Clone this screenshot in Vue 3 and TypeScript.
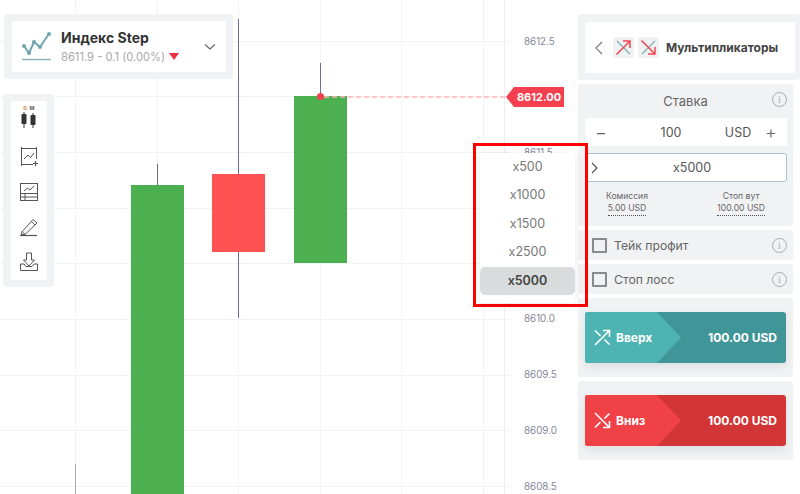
<template>
  <div class="stage">
    <div class="chart">
      <svg class="plot" width="578" height="494" viewBox="0 0 578 494">
        <line v-for="x in gridX" :key="'v' + x" :x1="x" y1="0" :x2="x" y2="494" class="grid" />
        <line v-for="y in gridY" :key="'h' + y" x1="0" :y1="y" x2="510" :y2="y" class="grid" />
        <line x1="504.5" y1="0" x2="504.5" y2="494" class="axis" />
        <text v-for="t in ticks" :key="t.label" x="524" :y="t.y + 3.5" class="tick">{{ t.label }}</text>

        <line x1="75.5" y1="464" x2="75.5" y2="494" class="wick wick-old" />
        <g v-for="c in candles" :key="c.x">
          <line :x1="c.x + 26.5" :y1="c.wickTop" :x2="c.x + 26.5" :y2="c.wickBottom" class="wick" />
          <rect :x="c.x" :y="c.top" width="53" :height="c.height" :fill="c.color" />
        </g>

        <line x1="324" y1="97" x2="508" y2="97" class="price-line" />
        <circle cx="320.5" cy="96.5" r="3.5" fill="#f5414f" />
      </svg>

      <div class="price-tag">8612.00</div>

      <div class="asset-panel">
        <div class="asset-card">
          <svg class="asset-logo" width="30" height="30" viewBox="0 0 30 30">
            <polyline points="2,14 7,21 12,10 18,15 27,1.800" fill="none" stroke="#6fa5ad" stroke-width="2" />
            <circle cx="2" cy="14" r="2" fill="#6fa5ad" />
            <circle cx="7" cy="21" r="2" fill="#6fa5ad" />
            <circle cx="12" cy="10" r="2" fill="#6fa5ad" />
            <circle cx="18" cy="15" r="2" fill="#6fa5ad" />
            <circle cx="27" cy="2" r="2" fill="#6fa5ad" />
            <line x1="0" y1="27.500" x2="29" y2="27.500" stroke="#8fb2b9" stroke-width="1.500" />
          </svg>
          <div class="asset-text">
            <div class="asset-name">Индекс Step</div>
            <div class="asset-quote">8611.9 - 0.1 (0.00%)<span class="down-mark"></span></div>
          </div>
          <svg class="asset-chevron" width="12" height="8" viewBox="0 0 12 8">
            <polyline points="1,1.500 6,6 11,1.500" fill="none" stroke="#666" stroke-width="1.200" />
          </svg>
        </div>
      </div>

      <div class="tool-panel">
        <div class="tool-card">
          <button class="tool tool-candles">
            <span class="tf"><i>S</i> <i>M</i></span>
            <svg width="18" height="16" viewBox="0 0 18 16">
              <path d="M4 0v16M13 1v15" stroke="#333" stroke-width="1" />
              <rect x="1.500" y="2" width="5" height="10" rx="1" fill="#333" />
              <rect x="10.500" y="3" width="5" height="10" rx="1" fill="#333" />
            </svg>
          </button>
          <button class="tool">
            <svg width="20" height="20" viewBox="0 0 20 20" fill="none" stroke="#555" stroke-width="1">
              <path d="M2 2.500h16M2 18.500h12M2.500 1v19M17.500 1v12" />
              <path d="M5 13l4-4 2.500 2.500L15 7" />
              <path d="M16.500 15v5M14 17.500h5" stroke-width="1.200" />
            </svg>
          </button>
          <button class="tool">
            <svg width="20" height="20" viewBox="0 0 20 20" fill="none" stroke="#555" stroke-width="1">
              <rect x="1.500" y="1.500" width="17" height="17" />
              <path d="M1.500 11.500h17M1.500 15h17M6 11.500v7" />
              <path d="M5 9l3.500-3 2.500 2 4-4" />
            </svg>
          </button>
          <button class="tool">
            <svg width="20" height="20" viewBox="0 0 20 20" fill="none" stroke="#555" stroke-width="1">
              <path d="M2.500 15.500L14 2.500l4 3.500L6 17.500H2.500z" />
              <path d="M12.500 4.500l3.500 3.500M3 14.500l3 3" />
              <path d="M1 18.500h17" stroke-width="1.200" />
            </svg>
          </button>
          <button class="tool">
            <svg width="20" height="20" viewBox="0 0 20 20" fill="none" stroke="#555" stroke-width="1">
              <path d="M7.500 1h5v7h3L10 14 4.500 8h3z" />
              <path d="M1.500 12v6.500h17V12h-3.500l-2 2.500H7L5 12z" />
            </svg>
          </button>
        </div>
      </div>
    </div>

    <aside class="side">
      <div class="block block-wide">
        <div class="mode-card">
          <svg class="back" width="8" height="14" viewBox="0 0 8 14">
            <polyline points="7,1 1,7 7,13" fill="none" stroke="#777" stroke-width="1.100" />
          </svg>
          <span class="mode-icon">
            <svg width="17" height="17" viewBox="0 0 17 17" fill="none">
              <path d="M2 2l13 13" stroke="#8fb5ba" stroke-width="1.500" />
              <path d="M1.500 15.500L15 2M8 2h7v7" stroke="#f4434f" stroke-width="1.500" />
            </svg>
          </span>
          <span class="mode-icon">
            <svg width="17" height="17" viewBox="0 0 17 17" fill="none">
              <path d="M2 15L15 2" stroke="#8fb5ba" stroke-width="1.500" />
              <path d="M1.500 1.500L15 15M8 15h7V8" stroke="#f4434f" stroke-width="1.500" />
            </svg>
          </span>
          <span class="mode-title">Мультипликаторы</span>
        </div>
      </div>

      <div class="block stake">
        <div class="stake-title">Ставка<span class="info stake-info">i</span></div>
        <div class="amount">
          <span class="amount-sign">−</span>
          <span class="amount-value">100</span>
          <span class="amount-cur">USD</span>
          <span class="amount-sign">+</span>
        </div>
        <div class="multiplier">
          <svg width="7" height="12" viewBox="0 0 7 12">
            <polyline points="1,1 6,6 1,11" fill="none" stroke="#555" stroke-width="1.200" />
          </svg>
          <span>x5000</span>
        </div>
        <div class="fees">
          <div v-for="f in fees" :key="f.label" class="fee">
            <div class="fee-label">{{ f.label }}</div>
            <div class="fee-value">{{ f.value }}</div>
          </div>
        </div>
      </div>

      <div v-for="o in options" :key="o" class="block option">
        <span class="check"></span>
        <span class="option-label">{{ o }}</span>
        <span class="info">i</span>
      </div>

      <div v-for="b in trades" :key="b.label" class="block trade-block">
        <div class="trade" :class="b.kind">
          <svg width="17" height="17" viewBox="0 0 17 17" fill="none" stroke="#fff" stroke-width="1.600">
            <path v-if="b.kind === 'up'" d="M1 16L15.500 1.500M9 1.500h6.500V8M1 1.500l5.500 5.500M10.500 10.500l5 5" />
            <path v-else d="M1 1L15.500 15.500M9 15.500h6.500V9M1 15.500l5.500-5.500M10.500 6.500l5-5" />
          </svg>
          <span class="trade-label">{{ b.label }}</span>
          <span class="trade-sum">100.00 USD</span>
        </div>
      </div>
    </aside>

    <div class="highlight">
      <ul class="menu">
        <li v-for="m in multipliers" :key="m" :class="{ active: m === 'x5000' }">{{ m }}</li>
      </ul>
    </div>
  </div>
</template>

<script setup lang="ts">
const gridX = [75.5, 157.5, 238.5, 320.5, 401.5, 483.5]
const gridY = [41.5, 96.5, 152.5, 208.5, 263.5, 319.5, 375.5, 430.5, 486.5]

const ticks = [
  { label: '8612.5', y: 41 },
  { label: '8611.5', y: 152 },
  { label: '8610.0', y: 318 },
  { label: '8609.5', y: 374 },
  { label: '8609.0', y: 430 },
  { label: '8608.5', y: 486 },
]

const green = '#4caf50'
const candles = [
  { x: 131, top: 185, height: 310, color: green, wickTop: 164, wickBottom: 185 },
  { x: 212, top: 174, height: 78, color: '#ff5353', wickTop: 19, wickBottom: 318 },
  { x: 294, top: 96, height: 167, color: green, wickTop: 63, wickBottom: 96 },
]

const fees = [
  { label: 'Комиссия', value: '5.00 USD' },
  { label: 'Стоп вут', value: '100.00 USD' },
]
const options = ['Тейк профит', 'Стоп лосс']
const trades = [
  { label: 'Вверх', kind: 'up' },
  { label: 'Вниз', kind: 'down' },
]
const multipliers = ['x500', 'x1000', 'x1500', 'x2500', 'x5000']
</script>

<style>
html, body { margin: 0; background: #fff; overflow: hidden; }
</style>

<style scoped>
.stage {
  position: relative;
  display: flex;
  width: 800px;
  height: 494px;
  overflow: hidden;
  font-family: "Inter", "Liberation Sans", sans-serif;
  color: #555;
}
.chart { position: relative; width: 578px; height: 494px; flex: none; }
.plot { position: absolute; inset: 0; }
.grid { stroke: #f2f3f5; stroke-width: 1; }
.axis { stroke: #eceef0; stroke-width: 1; }
.tick { font-size: 9.800px; fill: #85859a; font-family: "Inter", sans-serif; }
.wick { stroke: #6c6c96; stroke-width: 1; }
.wick-old { stroke: #a9a9bd; }
.price-line { stroke: #ffb3b8; stroke-width: 1.500; stroke-dasharray: 5 3; }

.price-tag {
  position: absolute;
  left: 506px;
  top: 87px;
  width: 58px;
  height: 20px;
  padding-left: 8px;
  box-sizing: border-box;
  background: #f5414f;
  clip-path: polygon(8px 0, 100% 0, 100% 100%, 8px 100%, 0 50%);
  color: #fff;
  font-size: 11px;
  font-weight: 700;
  line-height: 20px;
  text-align: center;
}

.asset-panel {
  position: absolute;
  left: 4px;
  top: 14px;
  padding: 7px 7px 7px 8px;
  background: #f1f2f4;
  border-radius: 4px;
}
.asset-card {
  display: flex;
  align-items: center;
  width: 214px;
  height: 51px;
  padding-left: 10px;
  box-sizing: border-box;
  background: #fff;
  border-radius: 2px;
}
.asset-logo { margin-right: 9px; flex: none; }
.asset-text { flex: 1; }
.asset-name { color: #333; font-size: 14px; font-weight: 700; line-height: 18px; }
.asset-quote { display: flex; align-items: center; color: #a9a9a9; font-size: 11.200px; line-height: 16px; margin-top: 2px; }
.down-mark {
  width: 0;
  height: 0;
  margin-left: 4px;
  border-left: 5px solid transparent;
  border-right: 5px solid transparent;
  border-top: 7px solid #ee2d3f;
}
.asset-chevron { margin-right: 10px; }

.tool-panel {
  position: absolute;
  left: 3px;
  top: 94px;
  padding: 7px 7px 7px 8px;
  background: #f1f2f4;
  border-radius: 4px;
}
.tool-card {
  display: flex;
  flex-direction: column;
  width: 36px;
  height: 179px;
  padding-top: 2px;
  box-sizing: border-box;
  background: #fff;
}
.tool {
  display: flex;
  flex-direction: column;
  align-items: center;
  justify-content: center;
  height: 36px;
  padding: 0;
  border: 0;
  background: none;
}
.tool-candles { height: 28px; margin-bottom: 8px; }
.tf { display: block; font-size: 6px; line-height: 6px; font-weight: 700; color: #555; margin-bottom: 1px; letter-spacing: 0.5px; }
.tf i { font-style: normal; }
.tf i:first-child { color: #c8893c; }

.side {
  display: flex;
  flex-direction: column;
  gap: 4px;
  width: 222px;
  padding-top: 14px;
  box-sizing: border-box;
  flex: none;
}
.block {
  width: 215px;
  padding: 0 7px;
  box-sizing: border-box;
  background: #f1f2f4;
  border-radius: 3px;
}
.block-wide { width: 222px; padding: 8px 5px 7px 7px; height: 66px; }
.mode-card {
  display: flex;
  align-items: center;
  height: 51px;
  padding-left: 10px;
  box-sizing: border-box;
  background: #fff;
  border-radius: 2px;
}
.back { margin-right: 10px; }
.mode-icon {
  display: flex;
  align-items: center;
  justify-content: center;
  width: 21px;
  height: 21px;
  margin-right: 4px;
  background: #eff1f2;
  border-radius: 3px;
}
.mode-title { margin-left: 3px; color: #444; font-size: 12px; font-weight: 700; white-space: nowrap; }

.stake { height: 142px; }
.stake-title {
  position: relative;
  height: 34px;
  color: #666;
  font-size: 13px;
  line-height: 34px;
  text-align: center;
}
.stake-info { position: absolute; right: -1px; top: 8px; }
.info {
  display: block;
  width: 13px;
  height: 13px;
  border: 1px solid #aaa;
  border-radius: 50%;
  color: #aaa;
  font-family: "Liberation Serif", serif;
  font-size: 10px;
  line-height: 13px;
  text-align: center;
}
.amount {
  display: grid;
  grid-template-columns: 32px 1fr 34px 32px;
  align-items: center;
  width: 202px;
  height: 28px;
  background: #fff;
  border-radius: 2px;
  color: #555;
  font-size: 12.500px;
  text-align: center;
}
.amount-sign { font-size: 18px; font-weight: 300; color: #666; }
.amount-value { padding-left: 4px; }
.multiplier {
  position: relative;
  display: flex;
  align-items: center;
  justify-content: center;
  width: 202px;
  height: 29px;
  margin-top: 7px;
  padding-left: 12px;
  box-sizing: border-box;
  background: #fff;
  border: 1px solid #a9c5c9;
  border-radius: 3px;
  color: #555;
  font-size: 12.500px;
}
.multiplier svg { position: absolute; left: 5px; top: 8px; }
.fees { display: flex; justify-content: space-between; margin-top: 8px; padding: 0 21px 0 21px; }
.fee { text-align: center; font-size: 8.600px; line-height: 12px; color: #666; }
.fee-value { display: inline-block; border-bottom: 1px dotted #555; padding-bottom: 1px; }

.option { display: flex; align-items: center; height: 30px; }
.check {
  width: 11px;
  height: 11px;
  margin: 0 7px;
  border: 2px solid #8a8a8a;
  border-radius: 1px;
  flex: none;
}
.option-label { flex: 1; color: #666; font-size: 12.200px; }
.option .info { margin-right: -1px; }

.trade-block { display: flex; align-items: center; height: 79px; }
.trade {
  position: relative;
  display: flex;
  align-items: center;
  width: 201px;
  height: 51px;
  padding: 0 9px;
  box-sizing: border-box;
  border-radius: 3px;
  color: #fff;
  font-size: 12px;
  font-weight: 700;
  box-shadow: 0 4px 10px rgba(0, 0, 0, 0.08);
  overflow: hidden;
}
.trade::before {
  content: "";
  position: absolute;
  left: 0;
  top: 0;
  width: 96px;
  height: 100%;
  clip-path: polygon(0 0, 72px 0, 100% 50%, 72px 100%, 0 100%);
}
.trade > * { position: relative; }
.trade.up { background: #3f9597; }
.trade.up::before { background: #4db4b3; }
.trade.down { background: #d13535; }
.trade.down::before { background: #ef4146; }
.trade-label { margin-left: 5px; flex: 1; }

.highlight {
  position: absolute;
  left: 473px;
  top: 143px;
  width: 115px;
  height: 164px;
  box-sizing: border-box;
  border: 3px solid #f00;
}
.menu {
  position: absolute;
  left: 4px;
  top: 7px;
  width: 95px;
  height: 150px;
  margin: 0;
  padding: 0;
  list-style: none;
  background: #fff;
  border-radius: 3px;
  box-shadow: 0 2px 10px rgba(0, 0, 0, 0.1);
}
.menu li {
  height: 28.400px;
  color: #777;
  font-size: 12.500px;
  line-height: 28.400px;
  text-align: center;
}
.menu li.active {
  background: #d9dcdd;
  border-radius: 5px;
  color: #444;
  font-weight: 600;
}
</style>
